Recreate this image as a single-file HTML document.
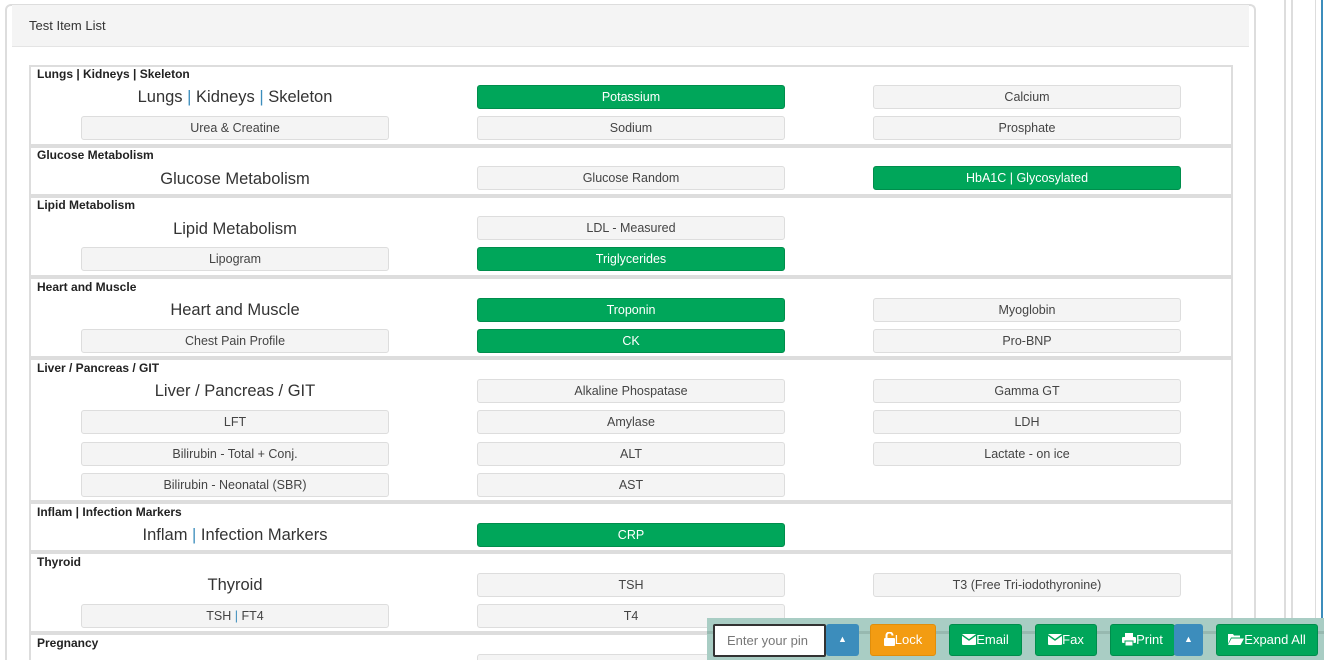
<!DOCTYPE html>
<html style="width:1324px;height:660px;overflow:hidden"><head><meta charset="utf-8"><style>
*{box-sizing:border-box;margin:0;padding:0}
html,body{overflow:hidden}
body{width:1324px;height:660px;overflow:hidden;background:#fff;font-family:"Liberation Sans",sans-serif;color:#333;position:relative}
.a{position:absolute}
.b{position:absolute;width:308px;height:24px;border:1px solid #ddd;border-radius:3px;background:#f4f4f4;font-size:12.5px;text-align:center;line-height:22px;color:#444}
.g{background:#00a65a;border-color:#008d4c;color:#fff}
.h{position:absolute;left:37px;font-size:12px;font-weight:bold;color:#222}
.t{position:absolute;width:308px;text-align:center;font-size:16.5px;color:#333}
.sep{position:absolute;left:29px;width:1203px;height:4px;background:#ddd}
.p{color:#3c8dbc}
.bt{position:absolute;top:624px;height:32px;border-radius:3px;color:#fff;font-size:13px;line-height:30px;text-align:center}
</style></head><body>
<div class="a" style="left:5px;top:4px;width:1251px;height:656px;border:2px solid #ddd;border-bottom:none;border-radius:6px 6px 0 0"></div>
<div class="a" style="left:12px;top:5px;width:1237px;height:42px;background:#f4f4f4;border-bottom:1px solid #e4e4e4"></div>
<div class="a" style="left:29px;top:18px;font-size:13px;color:#333">Test Item List</div>
<div class="a" style="left:1284px;top:0;width:2px;height:660px;background:#ddd"></div>
<div class="a" style="left:1291px;top:0;width:2px;height:660px;background:#ddd"></div>
<div class="a" style="left:1315px;top:0;width:1px;height:660px;background:#ddd"></div>
<div class="a" style="left:1321px;top:0;width:2px;height:660px;background:#3c8dbc"></div>
<div class="a" style="left:29px;top:65px;width:1204px;height:595px;border:2px solid #ddd;border-bottom:none"></div>

<div class="h" style="top:67px">Lungs | Kidneys | Skeleton</div>
<div class="t" style="left:81px;top:88px">Lungs <span class="p">|</span> Kidneys <span class="p">|</span> Skeleton</div>
<div class="b g" style="left:477px;top:85px">Potassium</div>
<div class="b" style="left:873px;top:85px">Calcium</div>
<div class="b" style="left:81px;top:116px">Urea &amp; Creatine</div>
<div class="b" style="left:477px;top:116px">Sodium</div>
<div class="b" style="left:873px;top:116px">Prosphate</div>
<div class="sep" style="top:144px"></div>

<div class="h" style="top:148px">Glucose Metabolism</div>
<div class="t" style="left:81px;top:170px">Glucose Metabolism</div>
<div class="b" style="left:477px;top:166px">Glucose Random</div>
<div class="b g" style="left:873px;top:166px">HbA1C | Glycosylated</div>
<div class="sep" style="top:194px"></div>

<div class="h" style="top:198px">Lipid Metabolism</div>
<div class="t" style="left:81px;top:220px">Lipid Metabolism</div>
<div class="b" style="left:477px;top:216px">LDL - Measured</div>
<div class="b" style="left:81px;top:247px">Lipogram</div>
<div class="b g" style="left:477px;top:247px">Triglycerides</div>
<div class="sep" style="top:275px"></div>

<div class="h" style="top:280px">Heart and Muscle</div>
<div class="t" style="left:81px;top:301px">Heart and Muscle</div>
<div class="b g" style="left:477px;top:298px">Troponin</div>
<div class="b" style="left:873px;top:298px">Myoglobin</div>
<div class="b" style="left:81px;top:329px">Chest Pain Profile</div>
<div class="b g" style="left:477px;top:329px">CK</div>
<div class="b" style="left:873px;top:329px">Pro-BNP</div>
<div class="sep" style="top:356px"></div>

<div class="h" style="top:361px">Liver / Pancreas / GIT</div>
<div class="t" style="left:81px;top:382px">Liver / Pancreas / GIT</div>
<div class="b" style="left:477px;top:379px">Alkaline Phospatase</div>
<div class="b" style="left:873px;top:379px">Gamma GT</div>
<div class="b" style="left:81px;top:410px">LFT</div>
<div class="b" style="left:477px;top:410px">Amylase</div>
<div class="b" style="left:873px;top:410px">LDH</div>
<div class="b" style="left:81px;top:442px">Bilirubin - Total + Conj.</div>
<div class="b" style="left:477px;top:442px">ALT</div>
<div class="b" style="left:873px;top:442px">Lactate - on ice</div>
<div class="b" style="left:81px;top:473px">Bilirubin - Neonatal (SBR)</div>
<div class="b" style="left:477px;top:473px">AST</div>
<div class="sep" style="top:500px"></div>

<div class="h" style="top:505px">Inflam | Infection Markers</div>
<div class="t" style="left:81px;top:526px">Inflam <span class="p">|</span> Infection Markers</div>
<div class="b g" style="left:477px;top:523px">CRP</div>
<div class="sep" style="top:550px"></div>

<div class="h" style="top:555px">Thyroid</div>
<div class="t" style="left:81px;top:576px">Thyroid</div>
<div class="b" style="left:477px;top:573px">TSH</div>
<div class="b" style="left:873px;top:573px">T3 (Free Tri-iodothyronine)</div>
<div class="b" style="left:81px;top:604px">TSH <span class="p">|</span> FT4</div>
<div class="b" style="left:477px;top:604px">T4</div>
<div class="sep" style="top:631px"></div>

<div class="h" style="top:636px">Pregnancy</div>
<div class="b" style="left:477px;top:654px;height:6px;border-bottom:none;border-radius:3px 3px 0 0"></div>

<div class="a" style="left:707px;top:618px;width:617px;height:42px;background:#a9cdc4"></div>
<div class="a" style="left:707px;top:631px;width:617px;height:3px;background:#97b9b0"></div>
<div class="a" style="left:713px;top:624px;width:113px;height:33px;background:#fff;border:2px solid #333;border-radius:2px;font-size:13px;color:#777;line-height:29px;padding-left:12px">Enter your pin</div>
<div class="bt" style="left:826px;width:33px;background:#3c8dbc;font-size:9px">▲</div>
<div class="bt" style="left:870px;width:66px;background:#f39c12;border:1px solid #e08e0b">
<svg width="11" height="14" viewBox="0 0 11 14" style="vertical-align:-2px"><rect x="0" y="6" width="11" height="8" rx="1" fill="#fff"/><path d="M2.5 6V3.5a3 3 0 0 1 6 0" stroke="#fff" stroke-width="2" fill="none"/></svg>Lock</div>
<div class="bt" style="left:949px;width:73px;background:#00a65a;border:1px solid #008d4c">
<svg width="14" height="11" viewBox="0 0 14 11" style="vertical-align:-1px"><rect width="14" height="11" rx="1" fill="#fff"/><path d="M0 1l7 5 7-5" stroke="#00a65a" stroke-width="1.5" fill="none"/></svg>Email</div>
<div class="bt" style="left:1035px;width:62px;background:#00a65a;border:1px solid #008d4c">
<svg width="14" height="11" viewBox="0 0 14 11" style="vertical-align:-1px"><rect width="14" height="11" rx="1" fill="#fff"/><path d="M0 1l7 5 7-5" stroke="#00a65a" stroke-width="1.5" fill="none"/></svg>Fax</div>
<div class="bt" style="left:1110px;width:65px;background:#00a65a;border:1px solid #008d4c">
<svg width="14" height="13" viewBox="0 0 14 13" style="vertical-align:-2px"><rect x="3" y="0" width="8" height="4" fill="#fff"/><rect x="0" y="4" width="14" height="6" rx="1" fill="#fff"/><rect x="3" y="8" width="8" height="5" fill="#fff" stroke="#00a65a"/></svg>Print</div>
<div class="bt" style="left:1174px;width:29px;background:#3c8dbc;font-size:9px">▲</div>
<div class="bt" style="left:1216px;width:102px;background:#00a65a;border:1px solid #008d4c">
<svg width="16" height="12" viewBox="0 0 16 12" style="vertical-align:-1px"><path d="M0 1h5l1 1.5h6v2H3L0 11z" fill="#fff"/><path d="M3.5 5.5H16L12.5 12H0z" fill="#fff"/></svg>Expand All</div>
</body></html>
